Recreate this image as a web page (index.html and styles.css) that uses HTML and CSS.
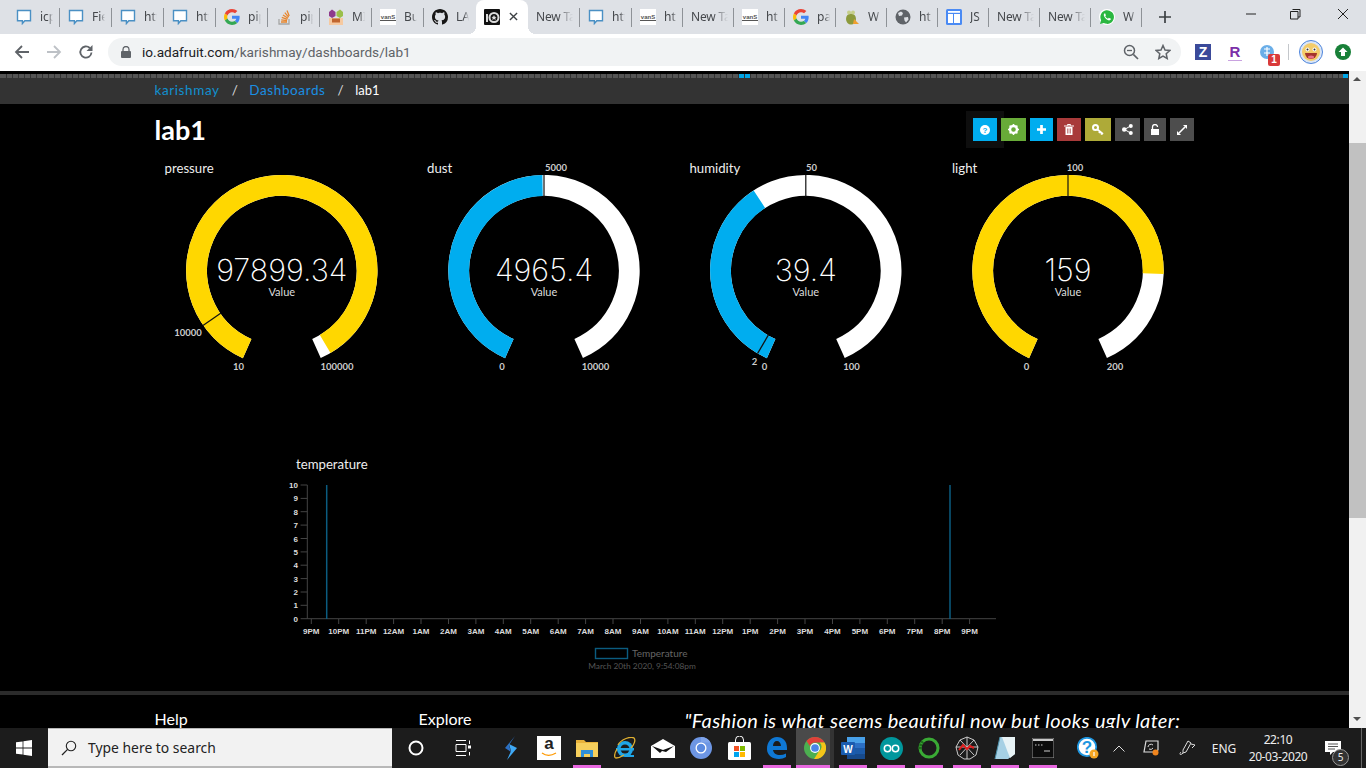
FILE: index.html
```html
<!DOCTYPE html>
<html lang="en">
<head>
    <meta charset="UTF-8">
    <title>lab1 - Adafruit IO</title>
    <link rel="stylesheet" href="styles.css">
</head>
<body>

<!-- shared icons -->
<svg class="sprites" width="0" height="0">
    <symbol id="i-chat" viewBox="0 0 16 16"><path d="M1.5 1.5h13v10.2H8.8l-2.4 2.8v-2.8H1.5z" fill="#fff" stroke="#4a90c4" stroke-width="1.4"/></symbol>
    <symbol id="i-google" viewBox="0 0 48 48">
        <path fill="#EA4335" d="M24 9.5c3.54 0 6.71 1.22 9.21 3.6l6.85-6.85C35.9 2.38 30.47 0 24 0 14.62 0 6.51 5.38 2.56 13.22l7.98 6.19C12.43 13.72 17.74 9.5 24 9.5z"/>
        <path fill="#4285F4" d="M46.98 24.55c0-1.57-.15-3.09-.38-4.55H24v9.02h12.94c-.58 2.96-2.26 5.48-4.78 7.18l7.73 6c4.51-4.18 7.09-10.36 7.09-17.65z"/>
        <path fill="#FBBC05" d="M10.53 28.59c-.48-1.45-.76-2.99-.76-4.59s.27-3.14.76-4.59l-7.98-6.19C.92 16.46 0 20.12 0 24c0 3.88.92 7.54 2.56 10.78l7.97-6.19z"/>
        <path fill="#34A853" d="M24 48c6.48 0 11.93-2.13 15.89-5.81l-7.73-6c-2.15 1.45-4.92 2.3-8.16 2.3-6.26 0-11.57-4.22-13.47-9.91l-7.98 6.19C6.51 42.62 14.62 48 24 48z"/>
    </symbol>
    <symbol id="i-vans" viewBox="0 0 16 16">
        <rect width="16" height="16" fill="#fff"/>
        <text x="8" y="10" text-anchor="middle" class="vans-text">vanS</text>
        <rect x="0" y="11" width="16" height="1" fill="#555"/>
    </symbol>
    <symbol id="i-chrome" viewBox="0 0 24 24">
        <circle cx="12" cy="12" r="12" fill="#4caf50"/>
        <path d="M12 0a12 12 0 0 1 10.4 6H12a6 6 0 0 0-5.6 3.9L2.7 4.4A12 12 0 0 1 12 0z" fill="#e0413a"/>
        <path d="M22.4 6A12 12 0 0 1 11 24l5.1-8.2A6 6 0 0 0 17 6z" fill="#f5c518"/>
        <circle cx="12" cy="12" r="5.4" fill="#fff"/>
        <circle cx="12" cy="12" r="4.2" fill="#4a86e8"/>
    </symbol>
</svg>

<!-- tab strip -->
<div class="tabstrip">
    <div class="tab"><svg class="fav"><use href="#i-chat"/></svg><span class="tab-title">icp</span></div>
    <div class="tab"><svg class="fav"><use href="#i-chat"/></svg><span class="tab-title">Fie</span></div>
    <div class="tab"><svg class="fav"><use href="#i-chat"/></svg><span class="tab-title">htt</span></div>
    <div class="tab"><svg class="fav"><use href="#i-chat"/></svg><span class="tab-title">htt</span></div>
    <div class="tab"><svg class="fav"><use href="#i-google"/></svg><span class="tab-title">pip</span></div>
    <div class="tab">
        <svg class="fav" viewBox="0 0 16 16"><path d="M3 10v5h10v-5" fill="none" stroke="#a6a6a6" stroke-width="1.3"/><path d="M5 13h6M5.2 10.8l5.8.9M5.8 8.4l5.6 2M7 6l5 3.2M8.8 3.6l3.8 4.6M11 1.6l2.2 5.4" stroke="#e8862e" stroke-width="1.3" fill="none"/></svg>
        <span class="tab-title">pip</span>
    </div>
    <div class="tab">
        <svg class="fav" viewBox="0 0 16 16"><path d="M1 3l3-2.5L7.500 3v4L4 9 1 7z" fill="#8e3a8c"/><path d="M8.500 3l3.500-2.500L15 3v4l-3 2-3.500-2z" fill="#9bbf4a"/><rect x="1" y="9" width="14" height="7" fill="#f6c9a0"/><rect x="4" y="9.500" width="8" height="4" fill="#c1662f"/></svg>
        <span class="tab-title">MI</span>
    </div>
    <div class="tab"><svg class="fav"><use href="#i-vans"/></svg><span class="tab-title">Bu</span></div>
    <div class="tab">
        <svg class="fav" viewBox="0 0 16 16"><path fill="#181717" d="M8 0C3.58 0 0 3.58 0 8c0 3.54 2.29 6.53 5.47 7.59.4.07.55-.17.55-.38 0-.19-.01-.82-.01-1.49-2.01.37-2.53-.49-2.69-.94-.09-.23-.48-.94-.82-1.13-.28-.15-.68-.52-.01-.53.63-.01 1.08.58 1.23.82.72 1.21 1.87.87 2.33.66.07-.52.28-.87.51-1.07-1.78-.2-3.64-.89-3.64-3.95 0-.87.31-1.59.82-2.15-.08-.2-.36-1.02.08-2.12 0 0 .67-.21 2.2.82.64-.18 1.32-.27 2-.27.68 0 1.36.09 2 .27 1.53-1.04 2.2-.82 2.2-.82.44 1.1.16 1.92.08 2.12.51.56.82 1.27.82 2.15 0 3.07-1.87 3.75-3.65 3.95.29.25.54.73.54 1.48 0 1.07-.01 1.93-.01 2.2 0 .21.15.46.55.38A8.013 8.013 0 0 0 16 8c0-4.42-3.58-8-8-8z"/></svg>
        <span class="tab-title">LA</span>
    </div>
    <div class="tab tab-active">
        <svg class="fav" viewBox="0 0 16 16"><rect width="16" height="16" rx="1" fill="#111"/><rect x="2" y="5" width="2" height="8" fill="#ddd"/><circle cx="10" cy="8.500" r="4.500" fill="none" stroke="#ddd" stroke-width="2"/><path d="M10 6l.8 1.700 1.800.2-1.300 1.200.4 1.800-1.700-.9-1.700.9.4-1.800-1.300-1.200 1.800-.2z" fill="#ddd"/></svg>
        <svg class="tab-close" viewBox="0 0 10 10"><path d="M1 1l8 8M9 1l-8 8" stroke="#3c4043" stroke-width="1.500"/></svg>
    </div>
    <div class="tab"><span class="tab-title tab-title-wide">New Tab</span></div>
    <div class="tab"><svg class="fav"><use href="#i-chat"/></svg><span class="tab-title">htt</span></div>
    <div class="tab"><svg class="fav"><use href="#i-vans"/></svg><span class="tab-title">ht</span></div>
    <div class="tab"><span class="tab-title tab-title-wide">New Tab</span></div>
    <div class="tab"><svg class="fav"><use href="#i-vans"/></svg><span class="tab-title">ht</span></div>
    <div class="tab"><svg class="fav"><use href="#i-google"/></svg><span class="tab-title">pa</span></div>
    <div class="tab">
        <svg class="fav" viewBox="0 0 16 16"><ellipse cx="7" cy="10" rx="5" ry="5.500" fill="#8c9a3c"/><circle cx="5" cy="3.500" r="2" fill="#c6cf8a"/><circle cx="9" cy="3.500" r="2" fill="#c6cf8a"/><path d="M10 10l5 5H9z" fill="#f0a030"/></svg>
        <span class="tab-title">W</span>
    </div>
    <div class="tab">
        <svg class="fav" viewBox="0 0 16 16"><circle cx="8" cy="8" r="7.500" fill="#5f6368"/><path d="M3 4l3-1.500 2 1.500-1 2.500L4 7zM9 8.500l4-.5.500 2.500-2.500 3-1.500-2z" fill="#dee1e6"/></svg>
        <span class="tab-title">ht</span>
    </div>
    <div class="tab">
        <svg class="fav" viewBox="0 0 16 16"><rect width="16" height="16" rx="1.500" fill="#4a8af4"/><rect x="2" y="5" width="5" height="9" fill="#fff"/><rect x="8" y="5" width="6" height="9" fill="#fff"/><rect x="2" y="2" width="12" height="1.800" fill="#fff"/></svg>
        <span class="tab-title">JS</span>
    </div>
    <div class="tab"><span class="tab-title tab-title-wide">New Tab</span></div>
    <div class="tab"><span class="tab-title tab-title-wide">New Tab</span></div>
    <div class="tab">
        <svg class="fav" viewBox="0 0 16 16"><circle cx="8" cy="8" r="8" fill="#fff"/><path d="M1 15l1.100-3.800A6.800 6.800 0 1 1 4.800 14z" fill="#2bb741"/><path d="M5.800 4.300c-.8.400-1.300 1.500-.8 2.800.7 1.800 2.300 3.500 4.200 4.200 1.300.4 2.300-.2 2.600-1 .1-.4 0-.6-.2-.7l-1.500-.7c-.2-.1-.4 0-.5.200l-.6.700c-1.200-.4-2.200-1.300-2.800-2.500l.5-.6c.2-.2.200-.4.100-.6l-.6-1.500c-.1-.3-.3-.4-.4-.3z" fill="#fff"/></svg>
        <span class="tab-title">W</span>
    </div>
    <svg class="new-tab" viewBox="0 0 12 12"><path d="M6 0v12M0 6h12" stroke="#3c4043" stroke-width="1.700"/></svg>
    <div class="window-btns">
        <svg viewBox="0 0 46 30"><path d="M18 14h10" stroke="#222" stroke-width="1"/></svg>
        <svg viewBox="0 0 46 30"><path d="M18.500 11.500h7.500v7.500h-2M16.500 13.500h7.500v7.500h-7.500z" transform="translate(0 -2)" fill="none" stroke="#222"/></svg>
        <svg viewBox="0 0 46 30"><path d="M18 9l10 10M28 9L18 19" stroke="#222"/></svg>
    </div>
</div>

<!-- address bar -->
<div class="toolbar">
    <svg class="tool-icon" viewBox="0 0 16 16"><path d="M15 8H2M8 2L2 8l6 6" fill="none" stroke="#5f6368" stroke-width="1.800"/></svg>
    <svg class="tool-icon" viewBox="0 0 16 16"><path d="M1 8h13M8 2l6 6-6 6" fill="none" stroke="#bdc1c6" stroke-width="1.800"/></svg>
    <svg class="tool-icon" viewBox="0 0 16 16"><path d="M13.500 8.500A5.600 5.600 0 1 1 11.800 4" fill="none" stroke="#5f6368" stroke-width="1.800"/><path d="M14.500 1v6h-6z" fill="#5f6368"/></svg>
    <div class="omnibox">
        <svg class="lock" viewBox="0 0 10 12"><path d="M2 5V3.500a3 3 0 0 1 6 0V5" fill="none" stroke="#5f6368" stroke-width="1.300"/><rect y="5" width="10" height="7" rx="1" fill="#5f6368"/></svg>
        <span class="url"><span class="url-host">io.adafruit.com</span>/karishmay/dashboards/lab1</span>
        <svg class="omni-icon omni-zoom" viewBox="0 0 16 16"><circle cx="6.500" cy="6.500" r="5" fill="none" stroke="#5f6368" stroke-width="1.500"/><path d="M10.300 10.300L15 15" stroke="#5f6368" stroke-width="1.700"/><path d="M4 6.500h5" stroke="#5f6368" stroke-width="1.300"/></svg>
        <svg class="omni-icon" viewBox="0 0 16 16"><path d="M8 1.500l2 4.500 4.800.5-3.600 3.200 1 4.800L8 12.100l-4.200 2.400 1-4.800L1.200 6.500 6 6z" fill="none" stroke="#5f6368" stroke-width="1.500"/></svg>
    </div>
    <div class="ext ext-z">Z</div>
    <div class="ext ext-r">R</div>
    <div class="ext ext-blue">
        <svg viewBox="0 0 14 14"><circle cx="7" cy="7" r="7" fill="#6aaee8"/><path d="M4 4h6M7 2v9M4 8h6" stroke="#fff" stroke-width="1.200"/></svg>
        <span class="ext-badge">1</span>
    </div>
    <div class="toolbar-sep"></div>
    <div class="avatar">
        <svg viewBox="0 0 24 24"><circle cx="12" cy="12" r="11.500" fill="#dbe6f6" stroke="#4c84dc"/><circle cx="12" cy="12" r="9" fill="#f3cc6a"/><circle cx="8.500" cy="9.500" r="2" fill="#fff"/><circle cx="15.500" cy="9.500" r="2" fill="#fff"/><circle cx="8.500" cy="9.500" r="1" fill="#333"/><circle cx="15.500" cy="9.500" r="1" fill="#333"/><path d="M6 13h12a6 6 0 0 1-12 0z" fill="#a3352b"/><ellipse cx="12" cy="17" rx="3" ry="1.500" fill="#e8708a"/></svg>
    </div>
    <svg class="update" viewBox="0 0 16 16"><circle cx="8" cy="8" r="8" fill="#188038"/><path d="M8 3.500L3.500 8H6v4h4V8h2.500z" fill="#fff"/></svg>
</div>

<!-- the page itself, cut off by the taskbar -->
<div class="page">
    <div class="page-main">
        <div class="loader">
            <span class="loader-dots"></span><span class="loader-dots loader-end"></span>
        </div>
        <nav class="crumbs">
            <div class="wrap crumbs-row">
                <a class="crumb-user">karishmay</a>
                <span class="crumb-sep">/</span>
                <a class="crumb-link">Dashboards</a>
                <span class="crumb-sep">/</span>
                <span class="crumb-here">lab1</span>
            </div>
        </nav>

        <div class="wrap">
            <div class="title-row">
                <h1>lab1</h1>
                <div class="tools">
                    <button class="tool tool-blue tool-focus"><svg width="10" height="10" viewBox="0 0 10 10"><circle cx="5" cy="5" r="5" fill="#fff"/><text x="5" y="8" text-anchor="middle" class="help-mark">?</text></svg></button>
                    <button class="tool tool-green"><svg width="11" height="11" viewBox="0 0 11 11"><circle cx="5.500" cy="5.500" r="3.500" fill="none" stroke="#fff" stroke-width="2.400"/><path d="M5.500 0v2M5.500 9v2M0 5.500h2M9 5.500h2M1.600 1.600l1.400 1.400M8 8l1.400 1.400M9.400 1.600L8 3M3 8L1.600 9.400" stroke="#fff" stroke-width="1.500"/></svg></button>
                    <button class="tool tool-blue"><svg width="9" height="9" viewBox="0 0 10 10"><path d="M5 0v10M0 5h10" stroke="#fff" stroke-width="3"/></svg></button>
                    <button class="tool tool-red"><svg width="10" height="11" viewBox="0 0 10 11"><path d="M0 2h10M3.500 1.500V.5h3v1" stroke="#fff" fill="none"/><path d="M1.500 3h7v8h-7z" fill="#fff"/><path d="M3.500 4.500V9.500M5 4.500V9.500M6.500 4.500V9.500" stroke="#a83a3a" stroke-width=".6"/></svg></button>
                    <button class="tool tool-olive"><svg width="12" height="11" viewBox="0 0 12 11"><circle cx="3.500" cy="3.500" r="2.500" fill="none" stroke="#fff" stroke-width="2"/><path d="M5.500 5.500l5.500 4.500M8 7.500l-1 1.500M10 9l-1 1.500" stroke="#fff" stroke-width="1.700"/></svg></button>
                    <button class="tool tool-gray"><svg width="11" height="11" viewBox="0 0 11 11"><path d="M8.500 2L2.500 5.500l6 3.500" fill="none" stroke="#fff"/><circle cx="8.800" cy="2" r="2" fill="#fff"/><circle cx="2.200" cy="5.500" r="2.200" fill="#fff"/><circle cx="8.800" cy="9" r="2" fill="#fff"/></svg></button>
                    <button class="tool tool-gray"><svg width="8" height="11" viewBox="0 0 8 11"><path d="M1.500 5V3a2.500 2.500 0 0 1 5 0" fill="none" stroke="#fff" stroke-width="1.300"/><rect y="5" width="8" height="6" fill="#fff"/></svg></button>
                    <button class="tool tool-gray"><svg width="10" height="10" viewBox="0 0 10 10"><path d="M2 8l6-6" stroke="#fff" stroke-width="1.600"/><path d="M6 0h4v4zM0 6l4 4H0z" fill="#fff"/></svg></button>
                </div>
            </div>
        </div>

        <div class="gauges">
            <section class="gauge-card">
                <h3>pressure</h3>
                <svg class="gauge" viewBox="0 0 262.500 222">
                    <g transform="translate(131.800 115.700) rotate(114)">
                        <circle class="ring ring-white" r="85.200" pathLength="360" stroke-dasharray="312 360"/>
                        <circle class="ring ring-yellow" r="85.200" pathLength="360" stroke-dasharray="305.400 360"/>
                    </g>
                    <line class="tick" transform="translate(131.800 115.700) rotate(235.200)" y1="-74" y2="-96"/>
                    <text class="g-value" x="131.800" y="126">97899.34</text>
                    <text class="g-label" x="131.800" y="141">Value</text>
                    <text class="g-tick" x="38" y="180.500">10000</text>
                    <text class="g-tick" x="88.500" y="214.500">10</text>
                    <text class="g-tick" x="187" y="214.500">100000</text>
                </svg>
            </section>
            <section class="gauge-card">
                <h3>dust</h3>
                <svg class="gauge" viewBox="0 0 262.500 222">
                    <g transform="translate(132 115.700) rotate(114)">
                        <circle class="ring ring-white" r="85.200" pathLength="360" stroke-dasharray="312 360"/>
                        <circle class="ring ring-blue" r="85.200" pathLength="360" stroke-dasharray="155 360"/>
                    </g>
                    <line class="tick" transform="translate(132 115.700)" y1="-74" y2="-96"/>
                    <text class="g-value" x="132" y="126">4965.4</text>
                    <text class="g-label" x="132" y="141">Value</text>
                    <text class="g-tick" x="144" y="16">5000</text>
                    <text class="g-tick" x="90" y="214.500">0</text>
                    <text class="g-tick" x="183.500" y="214.500">10000</text>
                </svg>
            </section>
            <section class="gauge-card">
                <h3>humidity</h3>
                <svg class="gauge" viewBox="0 0 262.500 222">
                    <g transform="translate(130.800 115.700) rotate(114)">
                        <circle class="ring ring-white" r="85.200" pathLength="360" stroke-dasharray="312 360"/>
                        <circle class="ring ring-blue" r="85.200" pathLength="360" stroke-dasharray="123 360"/>
                    </g>
                    <line class="tick" transform="translate(130.800 115.700)" y1="-74" y2="-96"/>
                    <line class="tick" transform="translate(130.800 115.700) rotate(210.200)" y1="-74" y2="-96"/>
                    <text class="g-value" x="130.800" y="126">39.4</text>
                    <text class="g-label" x="130.800" y="141">Value</text>
                    <text class="g-tick" x="136.500" y="16">50</text>
                    <text class="g-tick" x="79.500" y="210">2</text>
                    <text class="g-tick" x="89.500" y="214.500">0</text>
                    <text class="g-tick" x="176.500" y="214.500">100</text>
                </svg>
            </section>
            <section class="gauge-card">
                <h3>light</h3>
                <svg class="gauge" viewBox="0 0 262.500 222">
                    <g transform="translate(131 115.700) rotate(114)">
                        <circle class="ring ring-white" r="85.200" pathLength="360" stroke-dasharray="312 360"/>
                        <circle class="ring ring-yellow" r="85.200" pathLength="360" stroke-dasharray="248 360"/>
                    </g>
                    <line class="tick" transform="translate(131 115.700)" y1="-74" y2="-96"/>
                    <text class="g-value" x="131" y="126">159</text>
                    <text class="g-label" x="131" y="141">Value</text>
                    <text class="g-tick" x="138" y="16">100</text>
                    <text class="g-tick" x="89.500" y="214.500">0</text>
                    <text class="g-tick" x="178" y="214.500">200</text>
                </svg>
            </section>
        </div>

        <!-- line chart -->
        <section class="chart-block">
            <h3>temperature</h3>
            <svg class="chart" viewBox="0 0 720 195">
                <path class="axis" d="M25.300 7V141M18.600 7h6.700M18.600 20.400h6.700M18.600 33.700h6.700M18.600 47.100h6.700M18.600 60.500h6.700M18.600 73.900h6.700M18.600 87.200h6.700M18.600 100.600h6.700M18.600 114h6.700M18.600 127.300h6.700M18.600 140.700h6.700"/>
                <path class="axis" d="M25.300 140.700H714M29.300 141v5M56.700 141v5M84.200 141v5M111.600 141v5M139 141v5M166.500 141v5M193.900 141v5M221.300 141v5M248.700 141v5M276.200 141v5M303.600 141v5M331 141v5M358.500 141v5M385.900 141v5M413.300 141v5M440.700 141v5M468.200 141v5M495.600 141v5M523 141v5M550.500 141v5M577.900 141v5M605.300 141v5M632.700 141v5M660.200 141v5M687.600 141v5"/>
                <line class="series" x1="44.700" y1="7" x2="44.700" y2="141"/>
                <line class="series" x1="668" y1="7" x2="668" y2="141"/>
                <g class="y-labels">
                    <text x="16" y="10">10</text><text x="16" y="23.400">9</text><text x="16" y="36.700">8</text><text x="16" y="50.100">7</text><text x="16" y="63.500">6</text><text x="16" y="76.900">5</text><text x="16" y="90.200">4</text><text x="16" y="103.600">3</text><text x="16" y="117">2</text><text x="16" y="130.300">1</text><text x="16" y="143.700">0</text>
                </g>
                <g class="x-labels">
                    <text x="29.300" y="156">9PM</text><text x="56.700" y="156">10PM</text><text x="84.200" y="156">11PM</text><text x="111.600" y="156">12AM</text><text x="139" y="156">1AM</text><text x="166.500" y="156">2AM</text><text x="193.900" y="156">3AM</text><text x="221.300" y="156">4AM</text><text x="248.700" y="156">5AM</text><text x="276.200" y="156">6AM</text><text x="303.600" y="156">7AM</text><text x="331" y="156">8AM</text><text x="358.500" y="156">9AM</text><text x="385.900" y="156">10AM</text><text x="413.300" y="156">11AM</text><text x="440.700" y="156">12PM</text><text x="468.200" y="156">1PM</text><text x="495.600" y="156">2PM</text><text x="523" y="156">3PM</text><text x="550.500" y="156">4PM</text><text x="577.900" y="156">5PM</text><text x="605.300" y="156">6PM</text><text x="632.700" y="156">7PM</text><text x="660.200" y="156">8PM</text><text x="687.600" y="156">9PM</text>
                </g>
                <rect class="legend-box" x="313.500" y="170.500" width="32" height="10"/>
                <text class="legend-text" x="350" y="178.500">Temperature</text>
                <text class="legend-date" x="360" y="191">March 20th 2020, 9:54:08pm</text>
            </svg>
        </section>

        <footer class="site-footer">
            <div class="wrap footer-cols">
                <div>Help</div>
                <div>Explore</div>
                <div class="quote">"Fashion is what seems beautiful now but looks ugly later:</div>
            </div>
        </footer>
    </div>

    <div class="scrollbar">
        <div class="scroll-arrow scroll-up"></div>
        <div class="scroll-thumb"></div>
        <div class="scroll-arrow scroll-down"></div>
    </div>
</div>

<!-- windows taskbar -->
<div class="taskbar">
    <div class="start">
        <svg width="16" height="16" viewBox="0 0 16 16"><path d="M0 2.300l6.600-.9v6.200H0zM7.400 1.300L16 0v7.600H7.400zM0 8.400h6.600v6.200L0 13.700zM7.400 8.400H16V16l-8.600-1.300z" fill="#fff"/></svg>
    </div>
    <div class="search">
        <svg width="16" height="16" viewBox="0 0 16 16"><circle cx="10" cy="6" r="4.700" fill="none" stroke="#222" stroke-width="1.100"/><path d="M6.600 9.400L1 15" stroke="#222" stroke-width="1.300"/></svg>
        <span>Type here to search</span>
    </div>
    <div class="task-wide"><svg width="16" height="16" viewBox="0 0 16 16"><circle cx="8" cy="8" r="6.500" fill="none" stroke="#fff" stroke-width="2"/></svg></div>
    <div class="task-wide"><svg width="18" height="16" viewBox="0 0 18 16"><path d="M1 .5h10M1 15.500h10M1 4.500h10v7H1zM14.500 .5v3.500M14.500 12v3.500" fill="none" stroke="#fff"/><rect x="13" y="5.500" width="3" height="3" fill="#fff"/></svg></div>
    <div class="task-gap"></div>

    <div class="task"><svg width="14" height="24" viewBox="0 0 14 24"><path d="M11 0L1 12l6 4-2-7z" fill="#2b6fc4"/><path d="M5 8l8 4L3 24l4-9z" fill="#3fa9f5"/></svg></div>
    <div class="task"><div class="amazon"><span>a</span><svg width="16" height="5" viewBox="0 0 16 5"><path d="M1 1c4 3 9 3 14 0" fill="none" stroke="#f90" stroke-width="1.300"/></svg></div></div>
    <div class="task task-on"><svg width="22" height="20" viewBox="0 0 22 20"><path d="M0 2h8l2 2h12v15H0z" fill="#e8b23a"/><rect y="5" width="22" height="14" fill="#f6cf5c"/><path d="M5 19v-7h12v7h-3v-3H8v3z" fill="#2f8fd8"/></svg></div>
    <div class="task"><svg width="22" height="22" viewBox="0 0 22 22"><circle cx="11" cy="12" r="8" fill="#1fa6e8"/><circle cx="11" cy="12" r="4.500" fill="#1c1c1c"/><rect x="2" y="11" width="18" height="2.500" fill="#1fa6e8"/><path d="M11 20h9v-2h-9z" fill="#1fa6e8"/><path d="M4 8C7 2 17-1 20 1c2 2 0 7-3 10M3 12c-3 5-3 9-1 9s5-1 8-3" fill="none" stroke="#e0b030" stroke-width="1.300"/></svg></div>
    <div class="task"><svg width="24" height="19" viewBox="0 0 24 19"><path d="M0 7L12 0l12 7v12H0z" fill="#fff"/><path d="M1 7l11 4 11-4-8 6-4-1-2 2z" fill="#111"/></svg></div>
    <div class="task"><svg width="22" height="22" viewBox="0 0 22 22"><circle cx="11" cy="11" r="11" fill="#6d96e4"/><path d="M11 0a11 11 0 0 1 9.500 5.500H11z" fill="#7fa4ea"/><circle cx="11" cy="11" r="5.500" fill="#fff"/><circle cx="11" cy="11" r="4.200" fill="#5b8ae0"/></svg></div>
    <div class="task"><svg width="23" height="24" viewBox="0 0 23 24"><path d="M7.500 8V4a4 4 0 0 1 8 0v4" fill="none" stroke="#fff" stroke-width="1"/><rect y="6" width="23" height="18" rx="1.500" fill="#fff"/><rect x="6" y="10" width="5" height="5" fill="#f25022"/><rect x="12" y="10" width="5" height="5" fill="#7fba00"/><rect x="6" y="16" width="5" height="5" fill="#00a4ef"/><rect x="12" y="16" width="5" height="5" fill="#ffb900"/></svg></div>
    <div class="task task-on"><svg width="20" height="22" viewBox="0 0 20 22"><path d="M10 0c6 0 10 4 10 11v2H6c.4 3 3 5 7 5 2 0 4-.5 6-1.500V20c-2 1.300-4.500 2-7 2C5 22 0 18 0 12 0 5 4 0 10 0zm4 9c0-3-2-5-4-5-2.500 0-4 2-4 5z" fill="#0f78d4"/></svg></div>
    <div class="task task-on task-active"><svg width="22" height="22"><use href="#i-chrome"/></svg></div>
    <div class="task task-on"><svg width="24" height="22" viewBox="0 0 24 22"><rect x="6" width="18" height="22" rx="1" fill="#2b6fc4"/><rect x="6" width="18" height="6" fill="#48a0e8"/><rect x="6" y="11" width="18" height="6" fill="#1c5aa8"/><rect x="6" y="17" width="18" height="5" fill="#174a8c"/><rect y="5" width="14" height="13" rx="1" fill="#1a5cb0"/><text x="7" y="15.500" text-anchor="middle" class="word-mark">W</text></svg></div>
    <div class="task task-on"><svg width="23" height="23" viewBox="0 0 23 23"><circle cx="11.500" cy="11.500" r="11.500" fill="#00979d"/><circle cx="7.500" cy="11.500" r="3.200" fill="none" stroke="#fff" stroke-width="1.500"/><circle cx="15.500" cy="11.500" r="3.200" fill="none" stroke="#fff" stroke-width="1.500"/></svg></div>
    <div class="task task-on"><svg width="22" height="22" viewBox="0 0 22 22"><circle cx="11" cy="11" r="9" fill="none" stroke="#3aaa35" stroke-width="3"/><path d="M5 4.500A9 9 0 0 0 2.300 13" fill="none" stroke="#1d6a1a" stroke-width="3" stroke-dasharray="2 1"/></svg></div>
    <div class="task task-on"><svg width="24" height="24" viewBox="0 0 24 24"><path d="M12 1l7 3 4 7-2 8-6 4H9l-6-4-2-8 4-7zM12 1v22M1 11h22M5 4l14 15M19 4L5 19" fill="none" stroke="#ddd" stroke-width=".9"/><path d="M4 14l4-5 4 4 3-3 4 2" fill="none" stroke="#e02020" stroke-width="2"/></svg></div>
    <div class="task task-on"><svg width="22" height="24" viewBox="0 0 22 24"><path d="M6 1h15v17l-7 5H1z" fill="#a6d0e4"/><path d="M8 1h13v17l-5 4z" fill="#e8f3f6"/><path d="M6 1L1 23" stroke="#4d8fa8"/></svg></div>
    <div class="task task-on"><svg width="22" height="20" viewBox="0 0 22 20"><rect width="22" height="20" fill="#0c0c0c" stroke="#9a9a9a"/><rect x="1" y="1" width="20" height="2" fill="#c8c8c8"/><path d="M3 7h1.500M6 7h1.500M9 7h1.500M12 13h6" stroke="#ccc"/></svg></div>

    <div class="tray">
        <div class="tray-help">
            <svg width="22" height="22" viewBox="0 0 22 22"><circle cx="10" cy="10" r="9.200" fill="#fff" stroke="#1e96e0" stroke-width="1.800"/><text x="10" y="16" text-anchor="middle" class="help-big">?</text><circle cx="17" cy="17" r="4.500" fill="#f5a623"/><path d="M17 15v4" stroke="#fff" stroke-width="1.200"/></svg>
        </div>
        <div class="tray-chevron"><svg width="12" height="7" viewBox="0 0 12 7"><path d="M.5 6.500L6 1l5.500 5.500" fill="none" stroke="#ddd"/></svg></div>
        <div class="tray-screen"><svg width="16" height="16" viewBox="0 0 16 16"><path d="M3 1h12v9l-3 2H1z" fill="none" stroke="#ddd" stroke-width="1.200"/><path d="M5 7a3 3 0 0 1 5-2M10 8a3 3 0 0 1-4 1" fill="none" stroke="#ddd"/><circle cx="12.500" cy="12.500" r="3" fill="#f0851e"/></svg></div>
        <div class="tray-pen"><svg width="17" height="17" viewBox="0 0 17 17"><path d="M9 1l3 2-5 9-3 1 0-3zM12 4l4 1-3 3M4 13c-3 3-4 1-2-1" fill="none" stroke="#ddd"/></svg></div>
        <div class="tray-lang">ENG</div>
        <div class="tray-clock"><div>22:10</div><div>20-03-2020</div></div>
        <div class="tray-notif">
            <svg width="17" height="15" viewBox="0 0 17 15"><path d="M0 0h16v11H8l-3 3v-3H0z" fill="#fff"/><path d="M3 3h10M3 5.500h10M3 8h7" stroke="#555"/></svg>
            <span class="notif-count">5</span>
        </div>
        <div class="show-desktop"></div>
    </div>
</div>

</body>
</html>
```

FILE: styles.css
```css
*{
    margin: 0;
    padding: 0;
    box-sizing: border-box;
}
body {
    width: 1366px;
    height: 768px;
    overflow: hidden;
    display: flex;
    flex-direction: column;
    background-color: #000;
    font-family: Lato, "Noto Sans", sans-serif;
}
.sprites {
    position: absolute;
}
.vans-text {
    font: bold 6px "Liberation Sans", sans-serif;
    fill: #555;
}

/* Tab strip */
.tabstrip {
    height: 34px;
    flex: none;
    display: flex;
    padding-left: 8px;
    background-color: #dee1e6;
    font-family: "Noto Sans", sans-serif;
}
.tab {
    flex: 0 0 52px;
    height: 34px;
    display: flex;
    align-items: center;
    padding: 0 0 1px 8px;
    position: relative;
}
.tab:nth-child(n+13) {
    flex-basis: 51px;
}
.tab::after {
    content: "";
    position: absolute;
    right: 0;
    top: 8px;
    height: 19px;
    width: 1px;
    background-color: #8e9297;
}
.tab:nth-child(9)::after {
    display: none;
}
.tab-active {
    background-color: #fff;
    border-radius: 8px 8px 0 0;
}
.tab-active::before, .tab-active::after {
    content: "";
    position: absolute;
    top: auto;
    bottom: 0;
    width: 8px;
    height: 8px;
    background-color: transparent;
}
.tab-active::before {
    left: -8px;
    background-image: radial-gradient(circle at 0 0, transparent 8px, #fff 8px);
}
.tab-active::after {
    right: -8px;
    background-image: radial-gradient(circle at 100% 0, transparent 8px, #fff 8px);
}
.fav {
    width: 16px;
    height: 16px;
    flex: none;
}
.tab-title {
    margin-left: 8px;
    width: 13px;
    overflow: hidden;
    white-space: nowrap;
    font-size: 12px;
    color: #45484c;
    -webkit-mask-image: linear-gradient(to right, #000 60%, transparent);
    mask-image: linear-gradient(to right, #000 60%, transparent);
}
.tab-title-wide {
    margin-left: 0;
    width: 37px;
    letter-spacing: -.2px;
}
.tab-close {
    width: 9px;
    height: 9px;
    margin-left: 9px;
}
.new-tab {
    width: 12px;
    height: 12px;
    margin: 11px 0 0 17px;
}
.window-btns {
    margin-left: auto;
    display: flex;
    height: 30px;
}
.window-btns svg {
    width: 46px;
    height: 30px;
}

/* Toolbar */
.toolbar {
    height: 37px;
    flex: none;
    display: flex;
    align-items: center;
    padding: 0 0 1px 14px;
    background-color: #fff;
}
.tool-icon {
    width: 16px;
    height: 16px;
    margin-right: 16px;
}
.omnibox {
    width: 1073px;
    height: 28px;
    margin-left: -2px;
    display: flex;
    align-items: center;
    padding-left: 13px;
    background-color: #f1f3f4;
    border-radius: 14px;
}
.lock {
    width: 10px;
    height: 12px;
    margin-right: 11px;
}
.url {
    font-family: Roboto, sans-serif;
    font-size: 13.6px;
    color: #5f6368;
}
.url-host {
    color: #202124;
}
.omni-icon {
    width: 16px;
    height: 16px;
    margin-right: 10px;
}
.omni-zoom {
    margin-left: auto;
    margin-right: 16px;
}
.ext {
    flex: none;
}
.ext-z {
    width: 16px;
    height: 16px;
    margin-left: 14px;
    background-color: #3b4a9a;
    color: #fff;
    font: bold 14px/16px "Liberation Sans", sans-serif;
    text-align: center;
}
.ext-r {
    width: 14px;
    margin-left: 17px;
    color: #7b2fa8;
    font: bold 15px/17px "Liberation Sans", sans-serif;
    border-bottom: 1px solid #c9a2e0;
    text-align: center;
}
.ext-blue {
    position: relative;
    width: 14px;
    height: 14px;
    margin-left: 18px;
}
.ext-blue svg {
    display: block;
}
.ext-badge {
    position: absolute;
    left: 8px;
    top: 9px;
    width: 12px;
    height: 12px;
    background-color: #d93a3a;
    border-radius: 2px;
    color: #fff;
    font: bold 10px/12px "Liberation Sans", sans-serif;
    text-align: center;
}
.toolbar-sep {
    width: 1px;
    height: 16px;
    margin-left: 14px;
    background-color: #c4c7cb;
}
.avatar {
    width: 24px;
    height: 24px;
    margin-left: 10px;
}
.update {
    width: 16px;
    height: 16px;
    margin-left: 12px;
}

/* Page */
.page {
    height: 657px;
    flex: none;
    display: flex;
    background-color: #000;
    overflow: hidden;
}
.page-main {
    flex: 1;
    min-width: 0;
    color: #fff;
}
.wrap {
    width: 1040px;
    margin: 0 auto;
}
.loader {
    height: 7px;
    margin-top: 3px;
    background-color: #333;
    position: relative;
}
.loader-dots {
    position: absolute;
    z-index: 1;
    left: 739px;
    top: 0;
    width: 11px;
    height: 4px;
    background: repeating-linear-gradient(to right, #00a5e6 0 5px, #333 5px 6px);
}
.loader::before {
    content: "";
    position: absolute;
    inset: 0 0 3px 0;
    background: repeating-linear-gradient(to right, #555 0 5px, #333 5px 6px);
    background-position-x: 1px;
}
.loader-end {
    left: 1343px;
    width: 6px;
}
.crumbs {
    height: 23px;
    background-color: #333;
}
.crumbs-row {
    display: flex;
    align-items: center;
    height: 18px;
    font-size: 13.5px;
    letter-spacing: .6px;
}
.crumb-user {
    color: #1190cf;
}
.crumb-link {
    color: #1a8fe3;
}
.crumb-sep {
    margin: 0 11px 0 12px;
    color: #ddd;
}
.crumb-here {
    color: #fff;
    font-size: 13px;
    letter-spacing: 0;
}
.title-row {
    display: flex;
    justify-content: space-between;
    padding-top: 14px;
}
h1 {
    font-size: 27px;
    line-height: 23px;
    font-weight: 700;
}
.tools {
    display: flex;
    gap: 4px;
    height: 23px;
    margin-right: 1px;
}
.tool {
    padding: 0 7px;
    border: none;
    display: flex;
    align-items: center;
    color: #fff;
}
.tool-focus {
    outline: 7px solid #0e0e0e;
}
.tool-blue {
    background-color: #00adef;
}
.tool-green {
    background-color: #68ab38;
}
.tool-red {
    background-color: #a83a3a;
}
.tool-olive {
    background-color: #aeaa38;
}
.tool-gray {
    background-color: #4d4d4d;
}
.help-mark {
    font: bold 8px "Liberation Sans", sans-serif;
    fill: #00adef;
}

/* Gauges */
.gauges {
    display: grid;
    grid-template-columns: repeat(4, 262.5px);
    width: 1050px;
    margin: 14px auto 0;
}
.gauge-card {
    display: grid;
}
.gauge-card > * {
    grid-area: 1 / 1;
}
.gauge-card h3, .chart-block h3 {
    font-size: 13.2px;
    line-height: 27px;
    font-weight: 400;
    color: #eee;
}
.gauge-card h3 {
    padding-left: 15px;
}
.gauge {
    width: 262.5px;
    height: 222px;
    display: block;
}
.ring {
    fill: none;
    stroke-width: 21;
}
.ring-white {
    stroke: #fff;
}
.ring-yellow {
    stroke: #ffd700;
}
.ring-blue {
    stroke: #00adef;
}
.tick {
    stroke: #111;
    stroke-width: 1.2;
}
.g-value {
    font-family: Inter, Lato, sans-serif;
    font-size: 30.5px;
    font-weight: 200;
    fill: #fff;
    text-anchor: middle;
}
.g-label {
    font-size: 11px;
    fill: #ddd;
    text-anchor: middle;
}
.g-tick {
    font-size: 9.5px;
    font-weight: 700;
    fill: #ccc;
    text-anchor: middle;
}

/* Chart */
.chart-block {
    width: 720px;
    margin: 77px 0 0 282px;
}
.chart-block h3 {
    padding-left: 14px;
    line-height: 20px;
    margin-bottom: 4px;
}
.chart {
    width: 720px;
    height: 195px;
    display: block;
}
.axis {
    fill: none;
    stroke: #444;
}
.series {
    stroke: #0b5c80;
    stroke-width: 1.5;
}
.y-labels text, .x-labels text {
    font: bold 8px "Liberation Sans", sans-serif;
    fill: #dcdcdc;
}
.y-labels text {
    text-anchor: end;
}
.x-labels text {
    text-anchor: middle;
}
.legend-box {
    fill: none;
    stroke: #0b5c80;
    stroke-width: 1.4;
}
.legend-text {
    font-size: 10px;
    fill: #666;
}
.legend-date {
    font-size: 8.3px;
    fill: #555;
    text-anchor: middle;
}

/* Footer */
.site-footer {
    margin-top: 18px;
    border-top: 4px solid #2b2b2b;
    padding-top: 14px;
}
.footer-cols {
    display: grid;
    grid-template-columns: 264px 266px 1fr;
    font-size: 16px;
    line-height: 20px;
}
.quote {
    padding-top: 1px;
    font-size: 20px;
    letter-spacing: .35px;
    font-style: italic;
    white-space: nowrap;
}

/* Scrollbar */
.scrollbar {
    width: 17px;
    flex: none;
    display: flex;
    flex-direction: column;
    background-color: #f1f1f1;
}
.scroll-arrow {
    height: 17px;
    flex: none;
    position: relative;
}
.scroll-arrow::after {
    content: "";
    position: absolute;
    left: 4px;
    border: 4px solid transparent;
}
.scroll-up::after {
    top: 2px;
    border-bottom-color: #505050;
}
.scroll-down {
    margin-top: auto;
}
.scroll-down::after {
    top: 6px;
    border-top-color: #505050;
}
.scroll-thumb {
    height: 375px;
    margin-top: 55px;
    background-color: #c1c1c1;
}

/* Taskbar */
.taskbar {
    height: 40px;
    flex: none;
    display: flex;
    background-color: #1c1c1c;
    color: #eee;
    font-family: "Noto Sans", sans-serif;
}
.start {
    width: 48px;
    display: flex;
    align-items: center;
    justify-content: center;
}
.search {
    width: 344px;
    display: flex;
    align-items: center;
    gap: 11px;
    padding-left: 13px;
    background-color: #f2f2f2;
    border: 1px solid #b8b8b8;
    border-width: 1px 0 2px;
    color: #222;
    font-size: 13.9px;
}
.task-wide {
    width: 48px;
    display: flex;
    align-items: center;
    justify-content: center;
}
.task-gap {
    width: 4px;
}
.task {
    width: 38px;
    display: flex;
    align-items: center;
    justify-content: center;
    position: relative;
}
.task-on::after {
    content: "";
    position: absolute;
    left: 5px;
    right: 5px;
    bottom: 0;
    height: 3px;
    background-color: #e868e0;
}
.task-active {
    background-color: #4a4a4a;
    box-shadow: inset -4px 0 0 #333;
}
.task-active::after {
    left: 0;
    right: 4px;
}
.amazon {
    width: 24px;
    height: 24px;
    background-color: #fff;
    display: flex;
    flex-direction: column;
    align-items: center;
    color: #222;
    font: bold 17px/16px "Liberation Sans", sans-serif;
}
.amazon svg {
    display: block;
}
.word-mark {
    font: bold 10px "Liberation Sans", sans-serif;
    fill: #fff;
}
.help-big {
    font: bold 17px "Liberation Sans", sans-serif;
    fill: #1e96e0;
}
.tray {
    margin-left: auto;
    display: flex;
    align-items: center;
    height: 40px;
    font-size: 12px;
}
.tray > div {
    display: flex;
    align-items: center;
    justify-content: center;
}
.tray-help {
    width: 38px;
}
.tray-chevron {
    width: 24px;
}
.tray-screen {
    width: 40px;
}
.tray-pen {
    width: 32px;
}
.tray-lang {
    width: 42px;
}
.tray > .tray-clock {
    width: 66px;
    flex-direction: column;
    gap: 3px;
    line-height: 14px;
    letter-spacing: -.4px;
    white-space: nowrap;
}
.tray-notif {
    width: 50px;
    padding-right: 6px;
    position: relative;
}
.notif-count {
    position: absolute;
    left: 21px;
    top: 8px;
    width: 17px;
    height: 17px;
    border-radius: 50%;
    background-color: #333;
    border: 1px solid #999;
    font-size: 10px;
    line-height: 15px;
    text-align: center;
}
.show-desktop {
    width: 5px;
    height: 40px;
    border-left: 1px solid #666;
}
```
